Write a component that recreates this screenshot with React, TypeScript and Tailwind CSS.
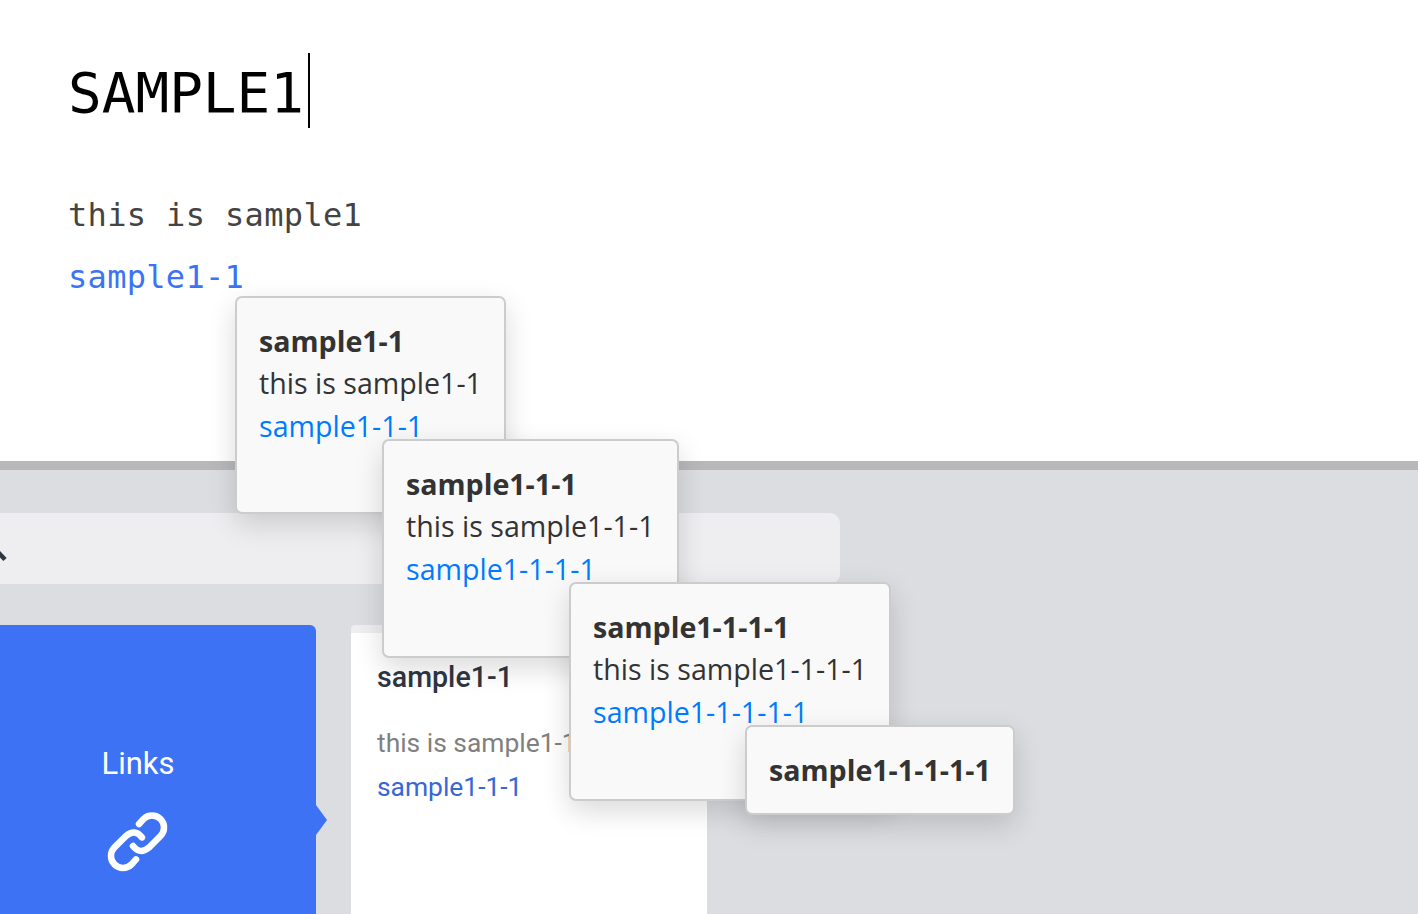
const mono = "font-['DejaVu_Sans_Mono',monospace]";

function Popover({ title, body, link, className }: { title: string; body?: string; link?: string; className: string }) {
  return (
    <div className={`absolute z-10 rounded-[7px] border-2 border-[#cccccc] bg-[#f9f9f9] px-[22px] pt-[22px] font-['Open_Sans',sans-serif] text-[28.6px] leading-[42.4px] text-[#333333] shadow-[0_10px_28px_rgba(0,0,0,0.15)] ${className}`}>
      <div className="font-bold whitespace-nowrap">{title}</div>
      {body && <div className="whitespace-nowrap">{body}</div>}
      {link && <div className="whitespace-nowrap text-[#007bff]">{link}</div>}
    </div>
  );
}

export default function App() {
  return (
    <div className="relative h-[914px] w-full overflow-hidden bg-[#dcdde1]">
      <section className="h-[461px] bg-white pl-[68px] pt-[53px]">
        <div className="flex h-[75px] items-start">
          <h1 className={`${mono} pt-[2px] text-[56px] leading-[75px] text-black`}>SAMPLE1</h1>
          <span className="ml-[4px] h-[75px] w-[2px] bg-black" />
        </div>
        <p className={`${mono} mt-[64px] text-[32px] leading-[46px] tracking-[0.35px] text-[#444444]`}>this is sample1</p>
        <a className={`${mono} mt-[16px] block text-[32px] leading-[46px] tracking-[0.3px] text-[#3d72f5]`}>sample1-1</a>
      </section>
      <div className="h-[9px] bg-[#b8b8ba]" />

      <div className="mt-[43px] flex h-[71px] w-[840px] items-center overflow-hidden rounded-r-[10px] bg-[#eeeef1]">
        <svg width="10" height="30" viewBox="0 0 10 30" className="shrink-0">
          <path d="M-3 17 L5 25.5" stroke="#2f3542" strokeWidth="4.5" fill="none" />
        </svg>
      </div>

      <div className="mt-[41px] flex gap-[35px]">
        <div className="relative flex h-[289px] w-[316px] flex-col items-center rounded-tr-[6px] bg-[#3d72f5] pt-[119px] font-['Roboto',sans-serif] text-white">
          <div className="ml-[-40px] text-[31px] leading-[40px]">Links</div>
          <svg width="80" height="80" viewBox="0 0 80 80" fill="none" stroke="currentColor" strokeWidth="6.5" strokeLinecap="round" className="ml-[-40px] mt-[18px]">
            <path d="M41 22 L45.5 17 A12 12 0 0 1 62.5 34 L51 45.5 Q42 53 35 44" />
            <path d="M38 57.4 L33.5 62.4 A12 12 0 0 1 16.5 45.4 L28 33.9 Q37 26.4 44 35.4" />
          </svg>
          <span className="absolute left-full top-[180px] h-0 w-0 border-y-[15px] border-l-[11px] border-y-transparent border-l-[#3d72f5]" />
        </div>
        <div className="h-[289px] w-[356px] rounded-t-[4px] border-t-[8px] border-[#eeeef1] bg-white pl-[26px] pt-[26px] font-['Roboto',sans-serif]">
          <div className="text-[28.6px] font-medium leading-[36px] text-[#2f3542]">sample1-1</div>
          <div className="mt-[30px] whitespace-nowrap text-[26.4px] leading-[36px] text-[#808080]">this is sample1-1</div>
          <a className="mt-[8px] block text-[26.4px] leading-[36px] text-[#3867d6]">sample1-1-1</a>
        </div>
      </div>

      <Popover className="left-[235px] top-[296px] h-[218px] w-[271px]" title="sample1-1" body="this is sample1-1" link="sample1-1-1" />
      <Popover className="left-[382px] top-[439px] h-[219px] w-[297px]" title="sample1-1-1" body="this is sample1-1-1" link="sample1-1-1-1" />
      <Popover className="left-[569px] top-[582px] h-[219px] w-[322px]" title="sample1-1-1-1" body="this is sample1-1-1-1" link="sample1-1-1-1-1" />
      <Popover className="left-[745px] top-[725px] h-[90px] w-[270px]" title="sample1-1-1-1-1" />
    </div>
  );
}
